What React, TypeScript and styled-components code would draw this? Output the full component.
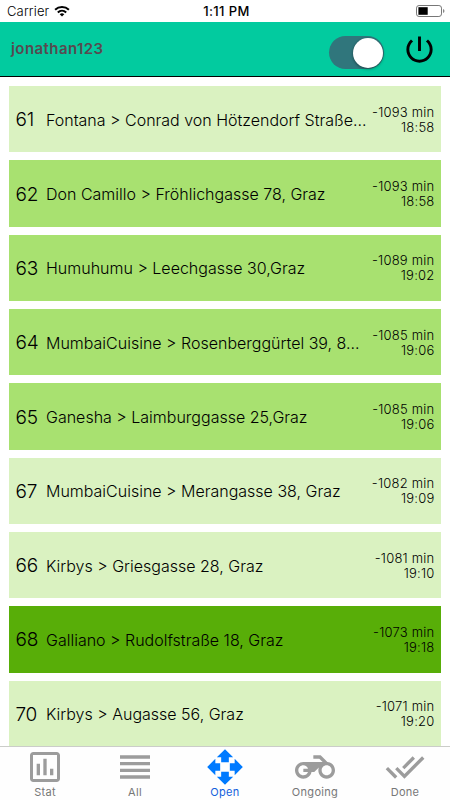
import React from "react";
import styled, { createGlobalStyle } from "styled-components";

const GlobalStyle = createGlobalStyle`
  * { box-sizing: border-box; }
  body { margin: 0; background: #fff; font-family: Inter, "Liberation Sans", sans-serif; color: #000; }
`;

const Screen = styled.div`
  width: 450px;
  height: 800px;
  display: flex;
  flex-direction: column;
  overflow: hidden;
  background: #fff;
`;

const StatusBar = styled.div`
  height: 22px;
  flex: none;
  display: grid;
  grid-template-columns: 1fr auto 1fr;
  align-items: center;
  padding: 0 5px 0 7px;
  font-size: 13px;
  line-height: 22px;
`;

const Carrier = styled.div`
  display: flex;
  align-items: center;
  gap: 4.5px;
  font-weight: 300;
  letter-spacing: 0.14px;
`;

const Clock = styled.div`
  font-weight: 500;
  font-size: 13px;
  letter-spacing: 0.4px;
  padding-left: 1px;
`;

const BatterySlot = styled.div`
  display: flex;
  justify-content: flex-end;
`;

const Header = styled.header`
  height: 55px;
  flex: none;
  display: flex;
  align-items: center;
  padding: 0 13px 0 11px;
  background: #02cb9f;
  border-bottom: 1px solid #000;
`;

const UserName = styled.div`
  flex: 1;
  font-size: 15px;
  font-weight: 600;
  line-height: 20px;
  letter-spacing: 0.42px;
  color: #584a50;
`;

const Toggle = styled.div`
  width: 55px;
  height: 33px;
  border-radius: 17px;
  padding: 1px;
  display: flex;
  justify-content: flex-end;
  align-items: center;
  background: #30767c;
  margin: 7px 18.5px 0 0;
`;

const Thumb = styled.div`
  width: 30px;
  height: 30px;
  border-radius: 50%;
  background: #fff;
  box-shadow: 0 1px 3px rgba(0, 0, 0, 0.45);
`;

const List = styled.main`
  flex: 1;
  min-height: 0;
  overflow: hidden;
  display: flex;
  flex-direction: column;
  gap: 8px;
  padding: 9.2px 9px 0;
`;

const tones = { light: "#daf2c1", medium: "#a8e170", dark: "#58ae08" };
type Tone = keyof typeof tones;

const Row = styled.div<{ $tone: Tone }>`
  flex: none;
  height: 66.3px;
  display: flex;
  align-items: center;
  padding: 1px 6.5px 0;
  background: ${(p) => tones[p.$tone]};
`;

const OrderNumber = styled.div`
  width: 30.5px;
  flex: none;
  font-size: 19px;
  font-weight: 300;
  letter-spacing: -0.3px;
`;

const Route = styled.div`
  width: 324px;
  flex: none;
  font-size: 16px;
  font-weight: 300;
  line-height: 22px;
  white-space: nowrap;
`;

const Timing = styled.div`
  flex: 1;
  text-align: right;
  white-space: nowrap;
  font-size: 13px;
  font-weight: 300;
  letter-spacing: 0.22px;
  line-height: 15px;
  display: flex;
  flex-direction: column;
  align-items: flex-end;
`;

const TabBar = styled.nav`
  height: 54px;
  flex: none;
  display: grid;
  grid-template-columns: repeat(5, 1fr);
  background: #fefefe;
  border-top: 1px solid #cbcdc9;
`;

const Tab = styled.div<{ $active?: boolean }>`
  display: flex;
  flex-direction: column;
  align-items: center;
  color: ${(p) => (p.$active ? "#007aff" : "#9c9c9c")};
`;

const TabLabel = styled.span<{ $active?: boolean }>`
  font-size: 11px;
  line-height: 13px;
  margin-top: -1px;
  letter-spacing: 0.3px;
  color: ${(p) => (p.$active ? "#145fdc" : "#777")};
`;

const Icon = styled.svg<{ $size: number }>`
  width: ${(p) => p.$size}px;
  height: ${(p) => p.$size}px;
  flex: none;
  display: block;
  fill: currentColor;
`;

const orders: { id: number; route: string; min: number; time: string; tone: Tone }[] = [
  { id: 61, route: "Fontana > Conrad von Hötzendorf Straße...", min: -1093, time: "18:58", tone: "light" },
  { id: 62, route: "Don Camillo > Fröhlichgasse 78, Graz", min: -1093, time: "18:58", tone: "medium" },
  { id: 63, route: "Humuhumu > Leechgasse 30,Graz", min: -1089, time: "19:02", tone: "medium" },
  { id: 64, route: "MumbaiCuisine > Rosenberggürtel 39, 8...", min: -1085, time: "19:06", tone: "medium" },
  { id: 65, route: "Ganesha > Laimburggasse 25,Graz", min: -1085, time: "19:06", tone: "medium" },
  { id: 67, route: "MumbaiCuisine > Merangasse 38, Graz", min: -1082, time: "19:09", tone: "light" },
  { id: 66, route: "Kirbys > Griesgasse 28, Graz", min: -1081, time: "19:10", tone: "light" },
  { id: 68, route: "Galliano > Rudolfstraße 18, Graz", min: -1073, time: "19:18", tone: "dark" },
  { id: 70, route: "Kirbys > Augasse 56, Graz", min: -1071, time: "19:20", tone: "light" },
];

const tabs = [
  {
    label: "Stat",
    path: "M9 17H7v-7h2v7zm4 0h-2V7h2v10zm4 0h-2v-4h2v4zM19 3H5c-1.1 0-2 .9-2 2v14c0 1.1.9 2 2 2h14c1.1 0 2-.9 2-2V5c0-1.1-.9-2-2-2zm.2 16.2H4.8V4.8h14.4v14.4z",
  },
  { label: "All", path: "M3 15h18v-2H3v2zm0 4h18v-2H3v2zm0-8h18V9H3v2zm0-6v2h18V5H3z" },
  {
    label: "Open",
    active: true,
    path: "M12 1.3L16.9 6.2H14.3V9.1H9.7V6.2H7.1zM12 22.7L7.1 17.8H9.7V14.9H14.3V17.8H16.9zM1.3 12L6.2 7.1V9.7H9.1V14.3H6.2V16.9zM22.7 12L17.8 16.9V14.3H14.9V9.7H17.8V7.1z",
  },
  {
    label: "Ongoing",
    path: "M19.44 9.03L15.41 5H11v2h3.59l2 2H5c-2.8 0-5 2.2-5 5s2.2 5 5 5c2.46 0 4.45-1.69 4.9-4h1.65l2.77-2.77c-.21.54-.32 1.14-.32 1.77 0 2.8 2.2 5 5 5s5-2.2 5-5c0-2.65-1.97-4.77-4.56-4.97zM7.82 15C7.4 16.15 6.28 17 5 17c-1.63 0-3-1.37-3-3s1.37-3 3-3c1.28 0 2.4.85 2.82 2H5v2h2.82zM19 17c-1.66 0-3-1.34-3-3s1.34-3 3-3 3 1.34 3 3-1.34 3-3 3z",
  },
  {
    label: "Done",
    path: "M18 7l-1.41-1.41-6.34 6.34 1.41 1.41L18 7zm4.24-1.41L11.66 16.17 7.48 12l-1.41 1.41L11.66 19l12-12-1.42-1.41zM.41 13.41L6 19l1.41-1.41L1.83 12 .41 13.41z",
  },
];

export default function App() {
  return (
    <>
      <GlobalStyle />
      <Screen>
        <StatusBar>
          <Carrier>
            Carrier
            <svg width="16" height="12" viewBox="0 0 16 12" fill="none" stroke="#000" strokeWidth="2">
              <path d="M1.1 4.7a10 10 0 0 1 13.8 0M3.8 7.4a6.2 6.2 0 0 1 8.4 0" />
              <path d="M8 11.6L5.7 9.3a3.3 3.3 0 0 1 4.6 0z" fill="#000" stroke="none" />
            </svg>
          </Carrier>
          <Clock>1:11 PM</Clock>
          <BatterySlot>
            <svg width="29" height="12" viewBox="0 0 29 12">
              <rect x="0.5" y="0.5" width="25" height="11" rx="2.6" fill="none" stroke="#777" />
              <rect x="2.4" y="2.2" width="9.3" height="7.6" fill="#000" />
              <path d="M27 4q1.5 .5 1.5 2T27 8z" fill="#888" />
            </svg>
          </BatterySlot>
        </StatusBar>
        <Header>
          <UserName>jonathan123</UserName>
          <Toggle>
            <Thumb />
          </Toggle>
          <Icon $size={35} viewBox="0 0 24 24">
            <path d="M13 3h-2v10h2V3zm4.83 2.17l-1.42 1.42C17.99 7.86 19 9.81 19 12c0 3.87-3.13 7-7 7s-7-3.13-7-7c0-2.19 1.01-4.14 2.58-5.42L6.17 5.17C4.23 6.82 3 9.26 3 12c0 4.97 4.03 9 9 9s9-4.03 9-9c0-2.74-1.23-5.18-3.17-6.83z" />
          </Icon>
        </Header>
        <List>
          {orders.map((o) => (
            <Row key={o.id} $tone={o.tone}>
              <OrderNumber>{o.id}</OrderNumber>
              <Route>{o.route}</Route>
              <Timing>
                <span>{o.min} min</span>
                <span>{o.time}</span>
              </Timing>
            </Row>
          ))}
        </List>
        <TabBar>
          {tabs.map((t) => (
            <Tab key={t.label} $active={t.active}>
              <Icon $size={40} viewBox="0 0 24 24">
                <path d={t.path} />
              </Icon>
              <TabLabel $active={t.active}>{t.label}</TabLabel>
            </Tab>
          ))}
        </TabBar>
      </Screen>
    </>
  );
}
